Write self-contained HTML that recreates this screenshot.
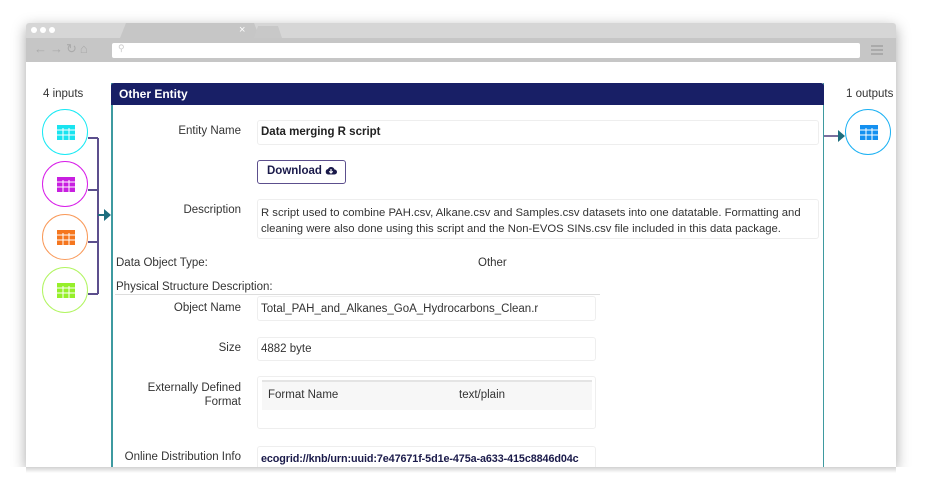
<!DOCTYPE html>
<html><head><meta charset="utf-8"><style>
*{margin:0;padding:0;box-sizing:border-box}
body{width:930px;height:501px;background:#fff;font-family:"Liberation Sans",sans-serif;position:relative;overflow:hidden;color:#333;font-size:11.5px}
.a{position:absolute;white-space:nowrap}
.win{left:26px;top:23px;width:870px;height:444px;background:#fff;box-shadow:0 4px 14px rgba(0,0,0,.35);overflow:hidden;border-radius:3px 3px 0 0}
.box{position:absolute;border:1px solid #eee;border-radius:3px;background:#fff;white-space:nowrap}
.lbl{position:absolute;text-align:right;width:200px;left:41px;font-size:11.5px;color:#333}
.circ{position:absolute;width:46px;height:46px;border-radius:50%;border:1.5px solid;background:#fff}
.circ svg{position:absolute;left:14px;top:15px}
.hl{position:absolute;height:2px;background:#5c4f8d}
</style></head><body>
<div class="a win">
 <div class="a" style="left:0;top:0;width:870px;height:15px;background:#d6d6d6"></div>
 <div class="a" style="left:94px;top:0;width:140px;height:15px;background:#c6c6c6;clip-path:polygon(6px 0,134px 0,140px 15px,0 15px)"></div>
 <div class="a" style="left:228px;top:3px;width:28px;height:12px;background:#c8c8c8;clip-path:polygon(4px 0,24px 0,28px 12px,0 12px)"></div>
 <div class="a" style="left:5px;top:4px;width:6px;height:6px;border-radius:50%;background:#fff"></div>
 <div class="a" style="left:14px;top:4px;width:6px;height:6px;border-radius:50%;background:#fff"></div>
 <div class="a" style="left:23px;top:4px;width:6px;height:6px;border-radius:50%;background:#fff"></div>
 <div class="a" style="left:213px;top:1px;color:#fff;font-size:11px">×</div>
 <div class="a" style="left:0;top:15px;width:870px;height:24px;background:#c6c6c6"></div>
 <div class="a" style="left:8px;top:18px;color:#aaa;font-size:13px;letter-spacing:3px">←→↻⌂</div>
 <div class="a" style="left:86px;top:20px;width:748px;height:15px;background:#fff;border-radius:2px"></div>
 <div class="a" style="left:92px;top:20px;color:#ccc;font-size:9px">⚲</div>
 <div class="a" style="left:845px;top:22px;width:12px;height:2px;background:#aaa;box-shadow:0 4px #aaa,0 8px #aaa"></div>
</div>
<div class="a" style="left:43px;top:88px">4 inputs</div>
<div class="a" style="left:846px;top:88px">1 outputs</div>
<div class="a" style="left:97px;top:138px;width:2px;height:156px;background:#5c4f8d"></div>
<div class="hl" style="left:88px;top:137px;width:10px"></div>
<div class="hl" style="left:88px;top:189px;width:10px"></div>
<div class="hl" style="left:88px;top:241px;width:10px"></div>
<div class="hl" style="left:88px;top:293px;width:10px"></div>
<div class="hl" style="left:98px;top:214px;width:6px;background:#1d6e7e"></div>
<div class="a" style="left:104px;top:209px;width:0;height:0;border-left:7px solid #1d6e7e;border-top:6px solid transparent;border-bottom:6px solid transparent"></div>
<div class="hl" style="left:824px;top:135px;width:15px;background:#7a6f9e"></div>
<div class="a" style="left:838px;top:130px;width:0;height:0;border-left:7px solid #1d6e7e;border-top:6px solid transparent;border-bottom:6px solid transparent"></div>
<div class="circ" style="left:42px;top:109px;border-color:#19e9f4"><svg width="18" height="15"><rect width="18" height="15" fill="#19e4f0"/><g stroke="#fff" stroke-width="1"><path d="M0 5H18M0 10H18M6 3V15M12 3V15"/></g></svg></div>
<div class="circ" style="left:42px;top:161px;border-color:#d81fe9"><svg width="18" height="15"><rect width="18" height="15" fill="#c81fe0"/><g stroke="#fff"><path d="M0 5H18M0 10H18M6 3V15M12 3V15"/></g></svg></div>
<div class="circ" style="left:42px;top:214px;border-color:#f99a5a"><svg width="18" height="15"><rect width="18" height="15" fill="#f5761e"/><g stroke="#fff"><path d="M0 5H18M0 10H18M6 3V15M12 3V15"/></g></svg></div>
<div class="circ" style="left:42px;top:267px;border-color:#b2f562"><svg width="18" height="15"><rect width="18" height="15" fill="#96ef2a"/><g stroke="#fff"><path d="M0 5H18M0 10H18M6 3V15M12 3V15"/></g></svg></div>
<div class="circ" style="left:845px;top:109px;border-color:#1cb1f3"><svg width="18" height="15"><rect width="18" height="15" fill="#1490f0"/><g stroke="#fff"><path d="M0 5H18M0 10H18M6 3V15M12 3V15"/></g></svg></div>
<div class="a" style="left:111px;top:83px;width:713px;height:384px;border-left:2px solid #3e9aa0;border-right:1px solid #3e9aa0"></div>
<div class="a" style="left:111px;top:83px;width:713px;height:22px;background:#181f66;border-radius:3px 3px 0 0;color:#fff;font-weight:bold;font-size:12px;padding:4px 8px">Other Entity</div>
<div class="lbl" style="top:125px">Entity Name</div>
<div class="box" style="left:257px;top:120px;width:562px;height:25px;padding:5px 3px;font-weight:bold;color:#222">Data merging R script</div>
<div class="a" style="left:257px;top:160px;width:89px;height:24px;border:1.5px solid #5c4f8d;border-radius:3px;font-weight:bold;color:#1a1a4a;padding:4px 9px">Download <svg width="12" height="10" viewBox="0 0 12 10" style="vertical-align:-1px"><path d="M3 9.5H9.5A2.5 2.5 0 0 0 9.5 4.5A3.5 3.5 0 0 0 3 4A2.8 2.8 0 0 0 3 9.5Z" fill="#1a1a4a"/><path d="M6 4V8M4.3 6.3L6 8L7.7 6.3" stroke="#fff" stroke-width="1.2" fill="none"/></svg></div>
<div class="lbl" style="top:204px">Description</div>
<div class="box" style="left:257px;top:199px;width:562px;height:40px;padding:5px 3px;line-height:16px;white-space:normal;font-size:11.3px">R script used to combine PAH.csv, Alkane.csv and Samples.csv datasets into one datatable. Formatting and cleaning were also done using this script and the Non-EVOS SINs.csv file included in this data package.</div>
<div class="a" style="left:116px;top:257px">Data Object Type:</div>
<div class="a" style="left:478px;top:257px">Other</div>
<div class="a" style="left:116px;top:281px">Physical Structure Description:</div>
<div class="a" style="left:115px;top:294px;width:485px;height:1px;background:#ddd"></div>
<div class="lbl" style="top:302px">Object Name</div>
<div class="box" style="left:257px;top:296px;width:339px;height:25px;padding:6px 3px">Total_PAH_and_Alkanes_GoA_Hydrocarbons_Clean.r</div>
<div class="lbl" style="top:342px">Size</div>
<div class="box" style="left:257px;top:337px;width:339px;height:24px;padding:5px 3px">4882 byte</div>
<div class="lbl" style="top:381px;line-height:14px">Externally Defined<br>Format</div>
<div class="box" style="left:257px;top:376px;width:339px;height:53px"></div>
<div class="a" style="left:262px;top:380px;width:330px;height:30px;background:#f7f7f7;border-top:2px solid #e4e4e4"></div>
<div class="a" style="left:268px;top:389px">Format Name</div>
<div class="a" style="left:459px;top:389px">text/plain</div>
<div class="lbl" style="top:451px">Online Distribution Info</div>
<div class="box" style="left:257px;top:446px;width:339px;height:30px;padding:6px 3px;font-weight:bold;color:#1a1a4a;font-size:10.8px;letter-spacing:-0.1px">ecogrid://knb/urn:uuid:7e47671f-5d1e-475a-a633-415c8846d04c</div>
<div class="a" style="left:0;top:467px;width:930px;height:34px;background:#fff"></div>
<div class="a" style="left:26px;top:467px;width:870px;height:6px;background:linear-gradient(rgba(0,0,0,.18),rgba(0,0,0,0))"></div>
</body></html>
